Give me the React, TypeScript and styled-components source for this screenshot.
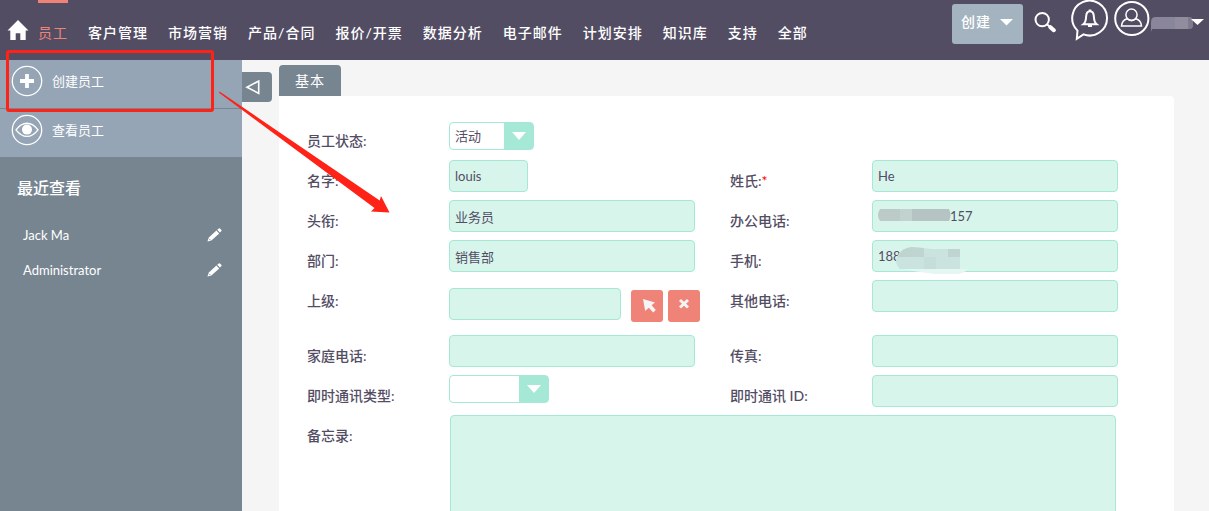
import React from "react";
import styled, { createGlobalStyle } from "styled-components";

const ink = "#534d64";
const slate = "#778591";
const mint = "#a5e8d6";
const mintSoft = "#d8f5ec";
const coral = "#f08377";
const sans = '"Lato", "Noto Sans CJK SC", sans-serif';

const GlobalStyle = createGlobalStyle`
  *, *::before, *::after { box-sizing: border-box; }
  body { margin: 0; background: #f5f5f5; color: ${ink}; font: 14px/20px ${sans}; }
  button, input, select, textarea { font: inherit; color: inherit; }
  a { color: inherit; text-decoration: none; }
  svg { display: block; flex: none; }
`;

const Page = styled.div`
  position: relative;
  display: flex;
  flex-direction: column;
  height: 100vh;
  overflow: hidden;
`;

const TopBar = styled.header`
  display: flex;
  justify-content: space-between;
  flex: none;
  height: 60px;
  background: ${ink};
  color: #fff;
`;

const Nav = styled.nav`
  display: flex;
  gap: 20px;
  letter-spacing: 1px;
  white-space: nowrap;
`;

const HomeLink = styled.a`
  padding: 19px 0 0 7px;
  margin-right: -11px;
`;

const NavLink = styled.a<{ $active?: boolean }>`
  padding-top: 20px;
  border-top: 3px solid ${(p) => (p.$active ? coral : "transparent")};
  color: ${(p) => (p.$active ? coral : "#fff")};
  font-weight: ${(p) => (p.$active ? 400 : 500)};
`;

const Tools = styled.div`
  display: flex;
  align-items: flex-start;
  padding-right: 5px;
`;

const CreateButton = styled.button`
  display: flex;
  align-items: center;
  gap: 9px;
  height: 40px;
  margin: 4px 10px 0 0;
  padding: 0 10px 4px 9px;
  border: 0;
  border-radius: 3px;
  background: #a3b3c0;
  font-weight: 500;
  letter-spacing: 1px;
`;

const IconButton = styled.button<{ $right?: number; $top?: number }>`
  padding: 0;
  margin: ${(p) => p.$top ?? 0}px ${(p) => p.$right ?? 0}px 0 0;
  border: 0;
  background: none;
`;

const AccountButton = styled(IconButton)`
  display: flex;
  align-items: center;
`;

const Body = styled.div`
  display: flex;
  flex: 1;
  min-height: 0;
`;

const Sidebar = styled.aside`
  flex: none;
  width: 242px;
  background: ${slate};
  color: #fff;
`;

const Action = styled.a`
  display: flex;
  align-items: center;
  gap: 9px;
  height: 48px;
  padding: 0 0 6px 11px;
  background: #95a5b5;
  font-size: 13px;

  & + & {
    height: 49px;
    border-top: 1px solid ${slate};
  }
`;

const RecentTitle = styled.h2`
  margin: 19px 0 17px 17px;
  font-size: 16px;
  line-height: 24px;
  font-weight: 500;
`;

const RecentItem = styled.div`
  display: flex;
  align-items: center;
  justify-content: space-between;
  height: 35px;
  padding: 0 20px 0 23px;
  font-size: 13px;
`;

const Collapse = styled.button`
  display: flex;
  align-items: center;
  flex: none;
  width: 30px;
  height: 30px;
  margin: 12px 7px 0 0;
  padding: 0 0 0 3px;
  border: 0;
  border-radius: 0 4px 4px 0;
  background: ${slate};
`;

const Main = styled.main`
  display: flex;
  flex-direction: column;
  align-items: flex-start;
  flex: 1;
  min-width: 0;
  padding: 5px 35px 0 0;
`;

const Tab = styled.button`
  flex: none;
  height: 31px;
  padding: 0 16px;
  border: 0;
  border-radius: 4px 4px 0 0;
  background: ${slate};
  color: #fff;
  letter-spacing: 1px;
`;

const Panel = styled.form`
  display: grid;
  grid-template-columns: 1fr 1fr;
  column-gap: 35px;
  align-content: start;
  align-self: stretch;
  flex: 1;
  padding: 24px 56px 0 28px;
  border-radius: 0 4px 0 0;
  background: #fff;
`;

const Cell = styled.div<{ $wide?: boolean; $tall?: boolean }>`
  display: flex;
  align-items: flex-start;
  min-width: 0;
  min-height: ${(p) => (p.$tall ? "55px" : "40px")};
  grid-column: ${(p) => (p.$wide ? "1 / -1" : "auto")};
`;

const Label = styled.label`
  flex: none;
  width: 142px;
  padding-top: 11px;
  font-weight: 500;
`;

const Required = styled.span`
  color: #f00;
`;

const Field = styled.div`
  position: relative;
  display: flex;
  flex: 1;
  min-width: 0;
`;

const TextInput = styled.input<{ $width?: number; $indent?: number; $top?: number }>`
  flex: none;
  width: ${(p) => (p.$width ? `${p.$width}px` : "100%")};
  height: 32px;
  margin-top: ${(p) => p.$top ?? 0}px;
  padding: 0 5px 0 ${(p) => p.$indent ?? 5}px;
  border: 1px solid ${mint};
  border-radius: 4px;
  background: ${mintSoft};
  font-size: 13px;
`;

const SelectBox = styled.div<{ $width: number; $top?: number }>`
  position: relative;
  width: ${(p) => p.$width}px;
  margin-top: ${(p) => p.$top ?? 0}px;

  &::after {
    content: "";
    position: absolute;
    top: 10px;
    right: 8px;
    border: solid transparent;
    border-width: 8px 7px 0;
    border-top-color: #fff;
    pointer-events: none;
  }
`;

const Select = styled.select`
  display: block;
  appearance: none;
  width: 100%;
  height: 28px;
  padding: 0 30px 0 5px;
  border: 1px solid ${mint};
  border-radius: 4px;
  background: linear-gradient(${mint}, ${mint}) right / 29px 100% no-repeat #fff;
  font-size: 13px;
`;

const SquareButton = styled.button`
  display: grid;
  place-items: center;
  flex: none;
  width: 32px;
  height: 32px;
  margin: 10px 0 0 5px;
  padding: 0 0 4px;
  border: 0;
  border-radius: 3px;
  background: ${coral};

  input + & {
    margin-left: 10px;
    padding: 0 0 0 4px;
  }
`;

const Memo = styled.textarea`
  flex: 1;
  height: 180px;
  margin: 0 2px 0 1px;
  padding: 5px;
  border: 1px solid ${mint};
  border-radius: 4px;
  background: ${mintSoft};
  resize: none;
`;

const Smudge = styled.svg`
  position: absolute;
  left: 0;
  top: 0;
  pointer-events: none;
`;

const Annotation = styled.svg`
  position: absolute;
  left: 0;
  top: 0;
  pointer-events: none;
`;

const Caret = () => (
  <svg width="13" height="7" viewBox="0 0 13 7" fill="#fff">
    <path d="M0 0h13L6.5 6.5z" />
  </svg>
);

const Pencil = () => (
  <svg width="15" height="14" viewBox="0 0 15 14" fill="#fff">
    <path d="M0.5 13.6 1.6 9.8 9.4 2.6 12.2 5.4 4.4 12.6zM10.2 1.8 11.8.4q.6-.4 1.2.1l1.4 1.4q.5.6 0 1.2L13 4.6z" />
    <path d="M2 10.7 3.5 12.2" stroke={slate} strokeWidth=".8" />
  </svg>
);

const navItems = ["员工", "客户管理", "市场营销", "产品/合同", "报价/开票", "数据分析", "电子邮件", "计划安排", "知识库", "支持", "全部"];
const recent = ["Jack Ma", "Administrator"];

export default function App() {
  return (
    <Page>
      <GlobalStyle />
      <TopBar>
        <Nav>
          <HomeLink href="#home" aria-label="首页">
            <svg width="22" height="22" viewBox="0 0 22 22" fill="#fff">
              <path d="M11 1 21.5 11.5H18.7V21H13.3V14.3H8.7V21H3.3V11.5H.5z" />
            </svg>
          </HomeLink>
          {navItems.map((t, i) => (
            <NavLink key={t} href="#nav" $active={i === 0}>{t}</NavLink>
          ))}
        </Nav>
        <Tools>
          <CreateButton type="button">创建 <Caret /></CreateButton>
          <IconButton type="button" aria-label="搜索" $top={11} $right={14}>
            <svg width="24" height="22" viewBox="0 0 24 22" fill="none" stroke="#fff">
              <circle cx="9.2" cy="8.6" r="6.7" strokeWidth="2" />
              <path d="M14 13.3l3 2.7" strokeWidth="2" />
              <path d="M17.4 16.2l3.4 3" strokeWidth="4" strokeLinecap="round" />
            </svg>
          </IconButton>
          <IconButton type="button" aria-label="通知" $right={5}>
            <svg width="38" height="41" viewBox="0 0 38 41" fill="none" stroke="#fff" strokeWidth="2">
              <path d="M12.5 34.4A17.4 17.4 0 1 0 6.5 30.6L5.8 38.8z" strokeLinejoin="miter" />
              <path d="M12.3 24.3c2.6-2.1 2.6-4.4 2.8-7.6.2-3.2 1.6-5.4 3.9-5.4s3.7 2.2 3.9 5.4c.2 3.2.2 5.5 2.8 7.6z" strokeWidth="2" />
              <path d="M19 11V9.5M17 25.7h4" strokeWidth="2.6" />
            </svg>
          </IconButton>
          <AccountButton type="button" aria-label="用户">
            <svg width="36" height="37" viewBox="0 0 36 37" fill="none" stroke="#fff">
              <circle cx="17.8" cy="18.5" r="16.6" strokeWidth="2" />
              <g strokeWidth="1.5">
                <circle cx="17.5" cy="14.7" r="5.6" />
                <path d="M13.2 18.8c-3.6 1-5.4 3.4-5.7 7.2h20c-.3-3.8-2.1-6.2-5.7-7.2q-4.3 3.8-8.6 0z" />
              </g>
            </svg>
            <svg width="54" height="37" viewBox="0 0 54 37">
              <path d="M1 32V22q0-5 5-5h19v12H2z" fill="#89859a" />
              <path d="M25 17h13v12H25z" fill="#918d9f" />
              <path d="M38 17h3l2 3v7l-2 2h-3z" fill="#7f7a8e" />
              <path d="M41 19h13l-6.5 6z" fill="#fff" />
            </svg>
          </AccountButton>
        </Tools>
      </TopBar>

      <Body>
        <Sidebar>
          <Action href="#create">
            <svg width="32" height="32" viewBox="0 0 32 32" fill="none" stroke="#fff">
              <circle cx="16" cy="16" r="14.7" strokeWidth="1.3" />
              <path d="M16 9v14M9 16h14" strokeWidth="3.8" />
            </svg>
            创建员工
          </Action>
          <Action href="#view">
            <svg width="32" height="32" viewBox="0 0 32 32" fill="none" stroke="#fff">
              <circle cx="16" cy="16" r="14.7" strokeWidth="1.3" />
              <path d="M5 15.8q5-6.6 11-6.6t11 6.6q-5 6.6-11 6.6T5 15.8z" strokeWidth="1.4" />
              <circle cx="16" cy="15.6" r="5" fill="#fff" stroke="none" />
            </svg>
            查看员工
          </Action>
          <RecentTitle>最近查看</RecentTitle>
          {recent.map((name) => (
            <RecentItem key={name}>
              <a href="#record">{name}</a>
              <a href="#edit" aria-label={`编辑 ${name}`}><Pencil /></a>
            </RecentItem>
          ))}
        </Sidebar>

        <Collapse type="button" aria-label="收起侧栏">
          <svg width="16" height="16" viewBox="0 0 16 16" fill="none" stroke="#fff" strokeWidth="1.6">
            <path d="M2 8.2 13.7 2v12.4z" />
          </svg>
        </Collapse>

        <Main>
          <Tab type="button">基本</Tab>
          <Panel>
            <Cell $wide>
              <Label htmlFor="status">员工状态:</Label>
              <Field>
                <SelectBox $width={85} $top={2}>
                  <Select id="status"><option>活动</option></Select>
                </SelectBox>
              </Field>
            </Cell>
            <Cell>
              <Label htmlFor="first">名字:</Label>
              <Field><TextInput id="first" defaultValue="louis" $width={79} /></Field>
            </Cell>
            <Cell>
              <Label htmlFor="last">姓氏:<Required>*</Required></Label>
              <Field><TextInput id="last" defaultValue="He" /></Field>
            </Cell>
            <Cell>
              <Label htmlFor="title">头衔:</Label>
              <Field><TextInput id="title" defaultValue="业务员" /></Field>
            </Cell>
            <Cell>
              <Label htmlFor="office">办公电话:</Label>
              <Field>
                <TextInput id="office" defaultValue="157" $indent={77} />
                <Smudge width="90" height="32" viewBox="0 0 90 32">
                  <path d="M8 9h20v12H8q-4-6 0-12z" fill="#bccbc8" />
                  <path d="M28 9h12v12H28z" fill="#c2d2cf" />
                  <path d="M40 9h37q3 6 0 12H40z" fill="#b5c4c2" />
                </Smudge>
              </Field>
            </Cell>
            <Cell>
              <Label htmlFor="dept">部门:</Label>
              <Field><TextInput id="dept" defaultValue="销售部" /></Field>
            </Cell>
            <Cell>
              <Label htmlFor="mobile">手机:</Label>
              <Field>
                <TextInput id="mobile" defaultValue="188" />
                <Smudge width="110" height="36" viewBox="0 0 110 36">
                  <path d="M28 29h68q-4 5-12 5H62z" fill="#e4f7f2" />
                  <path d="M28 29q-6-6-3-12 3-9 15-10l20 2h28v20z" fill="#cbe3de" />
                  <path d="M26 17q3-9 14-10v10z" fill="#bdd4cf" />
                  <path d="M40 7l12 1v9H40zM76 9h12v8H76z" fill="#c0d5d1" />
                  <path d="M52 17h12v12H52z" fill="#c5ded9" />
                </Smudge>
              </Field>
            </Cell>
            <Cell $tall>
              <Label htmlFor="manager">上级:</Label>
              <Field>
                <TextInput id="manager" $width={172} $top={8} />
                <SquareButton type="button" aria-label="选择">
                  <svg width="16" height="16" viewBox="0 0 16 16" fill="#f5f5f5">
                    <path d="M2 1 14 4.6 10.6 7.2 14.8 12 12.2 14.6 7.8 9.8 4.2 13z" />
                  </svg>
                </SquareButton>
                <SquareButton type="button" aria-label="清除">
                  <svg width="12" height="12" viewBox="0 0 12 12" stroke="#f5f5f5" strokeWidth="3">
                    <path d="M2 2l8 7.500M10 2L2 9.500" />
                  </svg>
                </SquareButton>
              </Field>
            </Cell>
            <Cell $tall>
              <Label htmlFor="other">其他电话:</Label>
              <Field><TextInput id="other" /></Field>
            </Cell>
            <Cell>
              <Label htmlFor="home">家庭电话:</Label>
              <Field><TextInput id="home" /></Field>
            </Cell>
            <Cell>
              <Label htmlFor="fax">传真:</Label>
              <Field><TextInput id="fax" /></Field>
            </Cell>
            <Cell>
              <Label htmlFor="imtype">即时通讯类型:</Label>
              <Field>
                <SelectBox $width={100}>
                  <Select id="imtype"><option></option></Select>
                </SelectBox>
              </Field>
            </Cell>
            <Cell>
              <Label htmlFor="imid">即时通讯 ID:</Label>
              <Field><TextInput id="imid" /></Field>
            </Cell>
            <Cell $wide>
              <Label htmlFor="memo">备忘录:</Label>
              <Memo id="memo" />
            </Cell>
          </Panel>
        </Main>
      </Body>

      <Annotation width="400" height="230" viewBox="0 0 400 230">
        <rect x="7.5" y="51.5" width="205" height="59" rx="1.5" fill="none" stroke="#ff2216" strokeWidth="3" />
        <path d="M219.500 91.500 379.700 200.500 381 196 389.500 212.500 371 211.500 374.500 208 219 92.800z" fill="#ff2216" />
      </Annotation>
    </Page>
  );
}
